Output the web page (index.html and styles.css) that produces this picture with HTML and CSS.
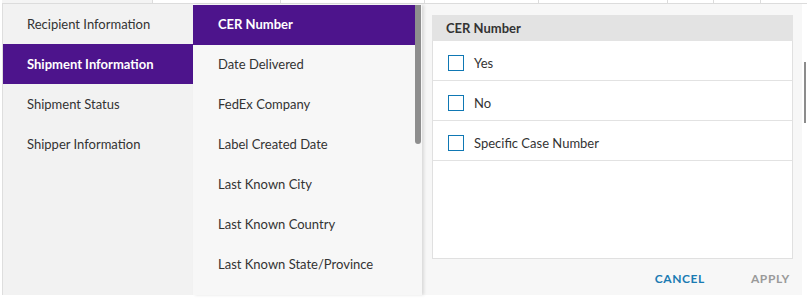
FILE: index.html
```html
<!DOCTYPE html>
<html>
<head>
<meta charset="utf-8">
<link rel="stylesheet" href="styles.css">
</head>
<body>
<div class="bgrow">
  <div class="cell c1"></div>
  <div class="cell c2"></div>
  <div class="cell c3"></div>
  <div class="cell c4"></div>
  <div class="cell c5"></div>
  <div class="cell c6"></div>
  <div class="cell c7"></div>
  <div class="cell c8"></div>
</div>
<div class="popup">
  <div class="cats">
    <div class="cat">Recipient Information</div>
    <div class="cat active">Shipment Information</div>
    <div class="cat">Shipment Status</div>
    <div class="cat">Shipper Information</div>
  </div>
  <div class="fields">
    <div class="field active">CER Number</div>
    <div class="field">Date Delivered</div>
    <div class="field">FedEx Company</div>
    <div class="field">Label Created Date</div>
    <div class="field">Last Known City</div>
    <div class="field">Last Known Country</div>
    <div class="field">Last Known State/Province</div>
    <div class="thumb"></div>
  </div>
  <div class="options">
    <div class="box">
      <div class="boxhead">CER Number</div>
      <label class="opt"><span class="chk"></span>Yes</label>
      <label class="opt"><span class="chk"></span>No</label>
      <label class="opt"><span class="chk"></span>Specific Case Number</label>
    </div>
    <div class="actions">
      <span class="btn cancel">CANCEL</span>
      <span class="btn apply">APPLY</span>
    </div>
  </div>
</div>
<div class="pagescroll"></div>
</body>
</html>
```

FILE: styles.css
```css
* { box-sizing: border-box; }
html, body { margin: 0; padding: 0; background: #fff; }
body {
  font-family: Lato, "Open Sans", sans-serif;
  font-size: 13px;
  color: #333;
  width: 807px;
  height: 300px;
  overflow: hidden;
  position: relative;
}
.bgrow {
  display: flex;
  height: 4px;
  border-bottom: 1px solid #dcdcdc;
  margin-left: 2px;
}
.cell { height: 100%; border-right: 1px solid #dcdcdc; }
.c1 { width: 151px; background: #f4f4f4; }
.c2 { width: 128px; }
.c3 { width: 144px; }
.c4 { width: 114px; }
.c5 { width: 129px; }
.c6 { width: 46px; }
.c7 { width: 47px; }
.c8 { flex: 1; border-right: none; }

.popup {
  display: flex;
  height: 291px;
  margin-left: 2px;
  width: 800px;
}
.cats {
  width: 191px;
  background: #f2f2f2;
  border-left: 1px solid #dedede;
  flex: none;
}
.cat {
  height: 40px;
  line-height: 40px;
  padding-left: 24px;
  white-space: nowrap;
}
.cat.active, .field.active {
  background: #4d148c;
  color: #fff;
  font-weight: 700;
}
.fields {
  width: 229px;
  flex: none;
  background: #f7f7f7;
  margin-top: 1px;
  position: relative;
  box-shadow: 2px 0 3px rgba(0,0,0,0.12);
  z-index: 1;
}
.field {
  height: 40px;
  line-height: 39px;
  padding-left: 25px;
  margin-right: 7px;
  white-space: nowrap;
}
.thumb {
  position: absolute;
  left: 222px;
  top: 0;
  width: 6px;
  height: 139px;
  background: #8e8e8e;
  border-radius: 0 0 3px 3px;
}
.options {
  flex: 1;
  background: #f7f7f7;
  padding: 11px 9px 0 10px;
  display: flex;
  flex-direction: column;
}
.box {
  background: #fff;
  border: 1px solid #e0e0e0;
  height: 248px;
}
.boxhead {
  height: 26px;
  line-height: 26px;
  background: #e3e3e3;
  font-weight: 700;
  padding-left: 14px;
  margin: -1px -1px 0 -1px;
}
.opt {
  display: flex;
  align-items: center;
  height: 40px;
  border-bottom: 1px solid #e2e2e2;
  padding-left: 15px;
  padding-top: 5px;
}
.chk {
  width: 16px;
  height: 16px;
  border: 1.5px solid #0f78b4;
  margin-right: 10px;
  background: #fff;
}
.actions {
  display: flex;
  justify-content: flex-end;
  align-items: center;
  height: 36px;
  padding-right: 3px;
  padding-top: 2px;
  gap: 46px;
}
.btn {
  font-weight: 700;
  font-size: 12px;
  letter-spacing: 0.6px;
}
.cancel { color: #1a7bb3; }
.apply { color: #9a9a9a; }
.pagescroll {
  position: absolute;
  right: 1px;
  top: 62px;
  width: 2px;
  height: 61px;
  background: #8c8c8c;
}
```
